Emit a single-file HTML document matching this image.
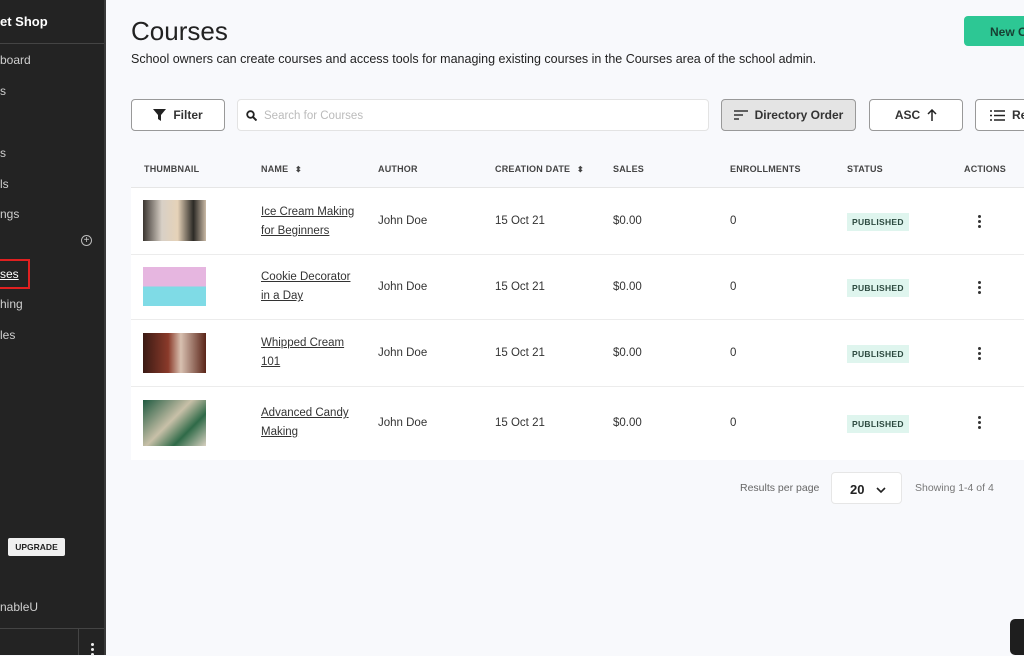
<!DOCTYPE html>
<html><head><meta charset="utf-8"><style>
*{margin:0;padding:0;box-sizing:border-box}
body{width:1024px;height:655px;overflow:hidden;background:#f8f9fc;font-family:"Liberation Sans",sans-serif;position:relative;color:#222}
.sb{position:absolute;left:0;top:0;width:106px;height:655px;background:#232323;border-right:2px solid #3a3a3a;color:#cfcfcf;font-size:12px}
.sb div{position:absolute}
.a{position:absolute}
.th{font-size:9px;font-weight:bold;color:#444;letter-spacing:.2px}
.row{position:absolute;left:131px;width:893px;background:#fff;border-bottom:1px solid #ececec}
.cell{position:absolute;font-size:11.5px;color:#333}
.nm{text-decoration:underline;line-height:19px;color:#333}
.pub{position:absolute;left:716px;background:#dff5ee;color:#2d4a40;font-size:8.5px;font-weight:bold;padding:4px 5px;letter-spacing:.3px}
.dots{position:absolute;left:847px;width:3px}
.dots i{display:block;width:3px;height:3px;border-radius:50%;background:#333;margin-bottom:2px}
.btn{position:absolute;top:99px;height:32px;border:1px solid #999;border-radius:4px;background:#fff;font-size:12px;font-weight:bold;color:#333;display:flex;align-items:center;justify-content:center;gap:7px}
</style></head><body>
<div class="sb">
<div style="left:0;top:14px;color:#fff;font-weight:bold;font-size:13px">et Shop</div>
<div style="left:0;top:43px;width:104px;height:1px;background:#444"></div>
<div style="left:0;top:53px">board</div>
<div style="left:0;top:84px">s</div>
<div style="left:0;top:146px">s</div>
<div style="left:0;top:177px">ls</div>
<div style="left:0;top:207px">ngs</div>
<div style="left:81px;top:235px;width:11px;height:11px;border:1px solid #bbb;border-radius:50%;font-size:10px;line-height:9px;text-align:center">+</div>
<div style="left:-2px;top:259px;width:32px;height:30px;border:2px solid #e02020"></div>
<div style="left:0;top:267px;color:#fff;text-decoration:underline">ses</div>
<div style="left:0;top:297px">hing</div>
<div style="left:0;top:328px">les</div>
<div style="left:8px;top:538px;width:57px;height:18px;background:#f0f0f0;border-radius:2px;color:#222;font-size:8.5px;font-weight:bold;text-align:center;line-height:18px">UPGRADE</div>
<div style="left:0;top:600px">nableU</div>
<div style="left:0;top:628px;width:104px;height:1px;background:#444"></div>
<div style="left:78px;top:628px;width:1px;height:27px;background:#444"></div>
<div style="left:91px;top:643px;width:3px"><i style="display:block;width:3px;height:3px;background:#eee;border-radius:50%;margin-bottom:2px"></i><i style="display:block;width:3px;height:3px;background:#eee;border-radius:50%;margin-bottom:2px"></i><i style="display:block;width:3px;height:3px;background:#eee;border-radius:50%"></i></div>
</div>

<div class="a" style="left:131px;top:16px;font-size:26px;color:#222">Courses</div>
<div class="a" style="left:131px;top:52px;font-size:12.5px;color:#222">School owners can create courses and access tools for managing existing courses in the Courses area of the school admin.</div>
<div class="a" style="left:964px;top:16px;width:70px;height:30px;background:#2dc794;border-radius:4px;font-size:12px;font-weight:bold;color:#174033;padding:9px 0 0 26px">New C</div>

<div class="btn" style="left:131px;width:94px"><svg width="13" height="12" viewBox="0 0 13 12"><path d="M0 0h13L8 6v6L5 10V6z" fill="#222"/></svg>Filter</div>
<div class="a" style="left:237px;top:99px;width:472px;height:32px;background:#fff;border:1px solid #e3e3e3;border-radius:4px"><svg style="position:absolute;left:8px;top:10px" width="11" height="11" viewBox="0 0 11 11"><circle cx="4.5" cy="4.5" r="3.3" fill="none" stroke="#222" stroke-width="1.8"/><path d="M7 7l3.5 3.5" stroke="#222" stroke-width="2"/></svg><span style="position:absolute;left:26px;top:10px;font-size:11.5px;color:#bbb">Search for Courses</span></div>
<div class="btn" style="left:721px;width:135px;background:#e4e4e4"><svg width="14" height="10" viewBox="0 0 14 10"><path d="M0 1h14M0 5h9M0 9h5" stroke="#333" stroke-width="1.4"/></svg>Directory Order</div>
<div class="btn" style="left:869px;width:94px">ASC <svg width="10" height="12" viewBox="0 0 10 12"><path d="M5 12V1M1 5l4-4 4 4" stroke="#222" stroke-width="1.5" fill="none"/></svg></div>
<div class="btn" style="left:975px;width:70px;justify-content:flex-start;padding-left:14px"><svg width="15" height="11" viewBox="0 0 15 11"><path d="M0 1h2M4 1h11M0 5.5h2M4 5.5h11M0 10h2M4 10h11" stroke="#222" stroke-width="1.4"/></svg>Re</div>

<div class="a th" style="left:144px;top:164px">THUMBNAIL</div>
<div class="a th" style="left:261px;top:164px">NAME <span style="font-size:8px;margin-left:4px">⬍</span></div>
<div class="a th" style="left:378px;top:164px">AUTHOR</div>
<div class="a th" style="left:495px;top:164px">CREATION DATE <span style="font-size:8px;margin-left:4px">⬍</span></div>
<div class="a th" style="left:613px;top:164px">SALES</div>
<div class="a th" style="left:730px;top:164px">ENROLLMENTS</div>
<div class="a th" style="left:847px;top:164px">STATUS</div>
<div class="a th" style="left:964px;top:164px">ACTIONS</div>
<div class="a" style="left:131px;top:187px;width:893px;height:1px;background:#e6e6e6"></div>

<div class="row" style="top:188px;height:67px">
<div class="a" style="left:12px;top:12px;width:63px;height:41px;background:linear-gradient(90deg,#3a3530,#d8d0c6 30%,#e6d2b8 55%,#2c2a26 80%,#c9b9a5)"></div>
<div class="cell nm" style="left:130px;top:15px">Ice Cream Making<br>for Beginners</div>
<div class="cell" style="left:247px;top:27px">John Doe</div><div class="cell" style="left:364px;top:27px">15 Oct 21</div><div class="cell" style="left:482px;top:27px">$0.00</div><div class="cell" style="left:599px;top:27px">0</div>
<div class="pub" style="top:25px">PUBLISHED</div><div class="dots" style="top:27px"><i></i><i></i><i></i></div></div>

<div class="row" style="top:255px;height:65px">
<div class="a" style="left:12px;top:12px;width:63px;height:39px;background:linear-gradient(180deg,#e6b6e0 50%,#7fdbe6 50%)"></div>
<div class="cell nm" style="left:130px;top:13px">Cookie Decorator<br>in a Day</div>
<div class="cell" style="left:247px;top:26px">John Doe</div><div class="cell" style="left:364px;top:26px">15 Oct 21</div><div class="cell" style="left:482px;top:26px">$0.00</div><div class="cell" style="left:599px;top:26px">0</div>
<div class="pub" style="top:24px">PUBLISHED</div><div class="dots" style="top:26px"><i></i><i></i><i></i></div></div>

<div class="row" style="top:320px;height:67px">
<div class="a" style="left:12px;top:13px;width:63px;height:40px;background:linear-gradient(90deg,#3a1a14,#8a3a2a 40%,#d8c0b0 60%,#5a2418)"></div>
<div class="cell nm" style="left:130px;top:14px">Whipped Cream<br>101</div>
<div class="cell" style="left:247px;top:27px">John Doe</div><div class="cell" style="left:364px;top:27px">15 Oct 21</div><div class="cell" style="left:482px;top:27px">$0.00</div><div class="cell" style="left:599px;top:27px">0</div>
<div class="pub" style="top:25px">PUBLISHED</div><div class="dots" style="top:27px"><i></i><i></i><i></i></div></div>

<div class="row" style="top:387px;height:73px;border-bottom:none">
<div class="a" style="left:12px;top:13px;width:63px;height:46px;background:linear-gradient(135deg,#1f5a40,#c8c0a8 45%,#2f6a48 70%,#d8d0c0)"></div>
<div class="cell nm" style="left:130px;top:17px">Advanced Candy<br>Making</div>
<div class="cell" style="left:247px;top:30px">John Doe</div><div class="cell" style="left:364px;top:30px">15 Oct 21</div><div class="cell" style="left:482px;top:30px">$0.00</div><div class="cell" style="left:599px;top:30px">0</div>
<div class="pub" style="top:28px">PUBLISHED</div><div class="dots" style="top:29px"><i></i><i></i><i></i></div></div>

<div class="a" style="left:740px;top:482px;font-size:10.5px;color:#666">Results per page</div>
<div class="a" style="left:831px;top:472px;width:71px;height:32px;background:#fff;border:1px solid #e6e6e6;border-radius:4px;font-size:13px;font-weight:bold;padding:9px 0 0 18px">20 <svg style="margin-left:8px" width="10" height="7" viewBox="0 0 10 7"><path d="M1 1l4 4 4-4" stroke="#222" stroke-width="1.6" fill="none"/></svg></div>
<div class="a" style="left:915px;top:482px;font-size:10.5px;color:#777">Showing 1-4 of 4</div>
<div class="a" style="left:1010px;top:619px;width:20px;height:36px;background:#1e1e1e;border-radius:5px"></div>
</body></html>
